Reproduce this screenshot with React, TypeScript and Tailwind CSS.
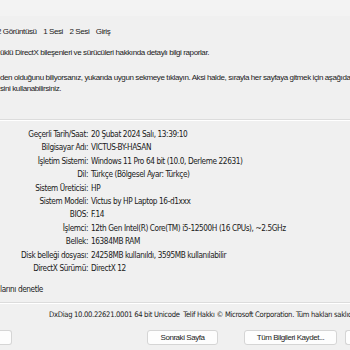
const rows = [
  { label: 'Geçerli Tarih/Saat:', value: '20 Şubat 2024 Salı, 13:39:10' },
  { label: 'Bilgisayar Adı:', value: 'VICTUS-BY-HASAN' },
  { label: 'İşletim Sistemi:', value: 'Windows 11 Pro 64 bit (10.0, Derleme 22631)' },
  { label: 'Dil:', value: 'Türkçe (Bölgesel Ayar: Türkçe)' },
  { label: 'Sistem Üreticisi:', value: 'HP' },
  { label: 'Sistem Modeli:', value: 'Victus by HP Laptop 16-d1xxx' },
  { label: 'BIOS:', value: 'F.14' },
  { label: 'İşlemci:', value: '12th Gen Intel(R) Core(TM) i5-12500H (16 CPUs), ~2.5GHz' },
  { label: 'Bellek:', value: '16384MB RAM' },
  { label: 'Disk belleği dosyası:', value: '24258MB kullanıldı, 3595MB kullanılabilir' },
  { label: 'DirectX Sürümü:', value: 'DirectX 12' },
]

const tabs = ['2 Görüntüsü', '1 Sesi', '2 Sesi', 'Giriş']

export default function App() {
  return (
    <div className="w-[350px] h-[350px] overflow-hidden bg-[#f0f0f0] text-[#1a1a1a] font-['Liberation_Sans',Arial,sans-serif]">
      {/* title strip */}
      <div className="h-[16px] bg-[#f3f3f3]" />

      {/* tabs */}
      <div className="h-[30px] -ml-[3px] flex items-center gap-[6.5px] pt-[2px] text-[8px] tracking-[-0.4px] whitespace-nowrap">
        {tabs.map((t) => (
          <span key={t}>{t}</span>
        ))}
      </div>

      {/* intro */}
      <div className="text-[8px] tracking-[-0.4px] whitespace-nowrap leading-[11px]">
        <p className="h-[11px] mt-[1px]">üklü DirectX bileşenleri ve sürücüleri hakkında detaylı bilgi raporlar.</p>
        <p className="mt-[14px]">den olduğunu biliyorsanız, yukarıda uygun sekmeye tıklayın. Aksi halde, sırayla her sayfaya gitmek için aşağıdaki</p>
        <p>sini kullanabilirsiniz.</p>
      </div>

      {/* divider */}
      <div className="mt-[25px] border-t border-[#dcdcdc] border-b-white border-b" />

      {/* system info */}
      <div className="pt-[7px] grid grid-cols-[88px_1fr] gap-x-[3px] text-[8.2px] tracking-[-0.4px] leading-[13.4px] whitespace-nowrap font-['DejaVu_Sans_Condensed','DejaVu_Sans',sans-serif]">
        {rows.map((r) => (
          <div key={r.label} className="contents">
            <span className="text-right">{r.label}</span>
            <span>{r.value}</span>
          </div>
        ))}
      </div>

      {/* checkbox line */}
      <div className="mt-[8px] h-[12px] flex items-center text-[8.2px] tracking-[-0.4px] whitespace-nowrap font-['DejaVu_Sans_Condensed','DejaVu_Sans',sans-serif]">
        larını denetle
      </div>

      <div className="mt-[7px] border-t border-[#dcdcdc] border-b-white border-b" />

      {/* footer */}
      <div className="h-[20px] pl-[49px] flex items-center whitespace-nowrap text-[7.6px] tracking-[-0.3px] font-['DejaVu_Sans_Condensed','DejaVu_Sans',sans-serif]">
        DxDiag 10.00.22621.0001 64 bit Unicode&nbsp; Telif Hakkı © Microsoft Corporation. Tüm hakları saklıdır.
      </div>

      {/* buttons */}
      <div className="mt-[6px] flex items-center text-[8px] tracking-[-0.45px] whitespace-nowrap text-[#222]">
        <div className="shrink-0 w-[12px] h-[15px] bg-[#fdfdfd] border border-l-0 border-[#d5d5d5] rounded-r-[3px]" />
        <button className="shrink-0 ml-[135px] w-[71px] h-[15px] bg-[#fdfdfd] border border-[#d5d5d5] rounded-[3px] flex items-center justify-center">
          Sonraki Sayfa
        </button>
        <button className="shrink-0 ml-[26px] w-[93px] h-[15px] bg-[#fdfdfd] border border-[#d5d5d5] rounded-[3px] flex items-center justify-center">
          Tüm Bilgileri Kaydet...
        </button>
        <div className="shrink-0 ml-[8px] w-[20px] h-[15px] bg-[#fdfdfd] border border-r-0 border-[#d5d5d5] rounded-l-[3px]" />
      </div>
    </div>
  )
}
